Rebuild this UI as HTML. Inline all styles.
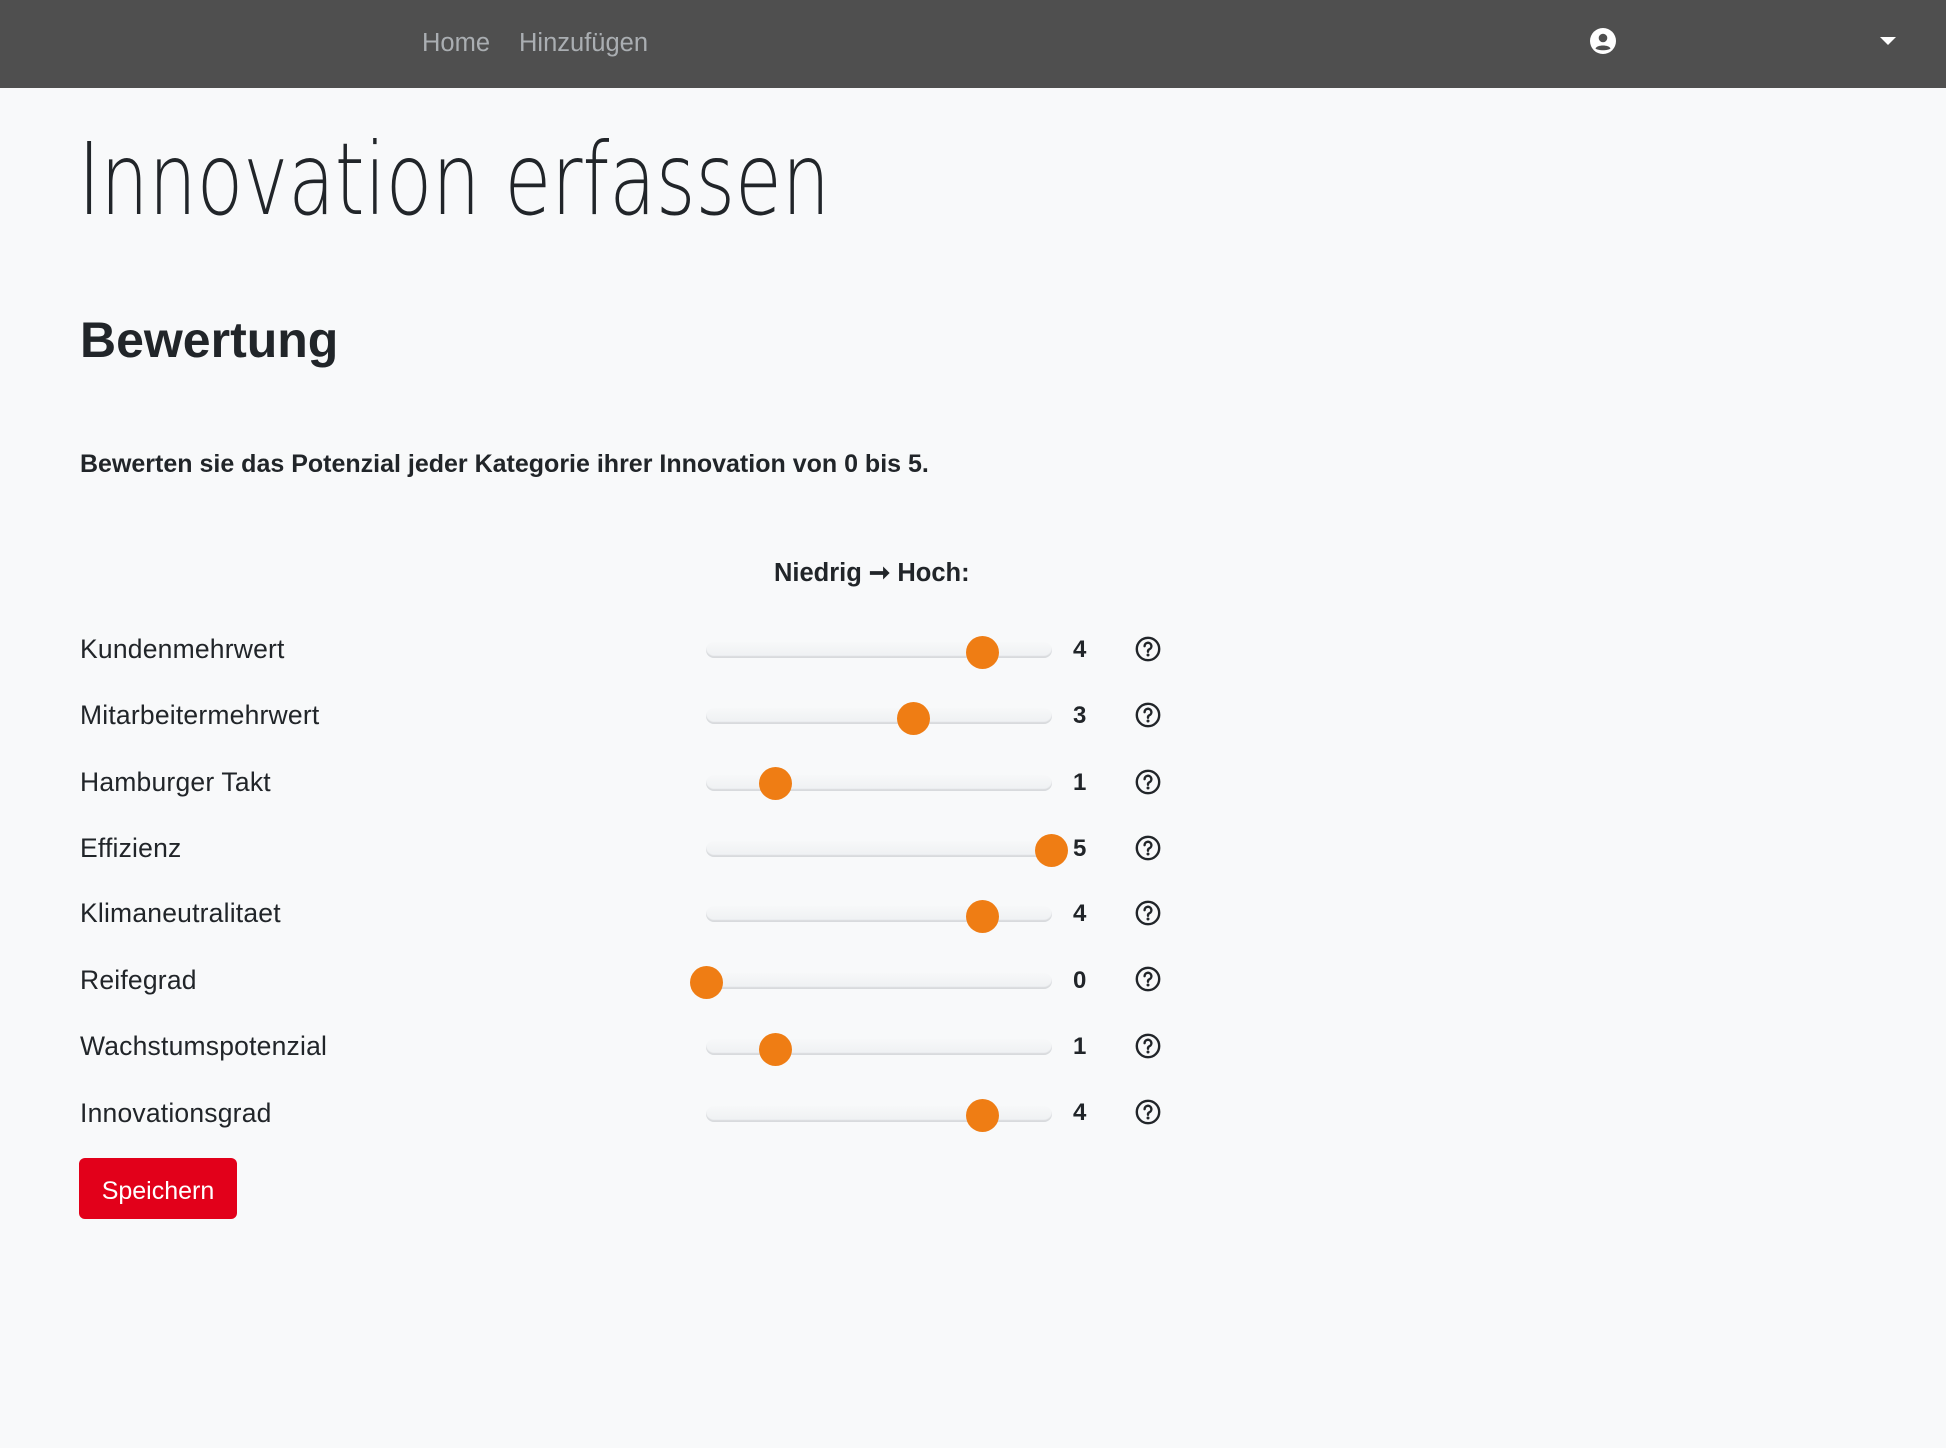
<!DOCTYPE html>
<html><head><meta charset="utf-8"><style>
*{margin:0;padding:0;box-sizing:border-box}
html,body{width:1946px;height:1448px;background:#f8f9fa;font-family:"Liberation Sans",sans-serif;color:#212529;overflow:hidden;position:relative}
.nav{position:absolute;left:0;top:0;width:1946px;height:88px;background:#4f4f4f}
.nl{position:absolute;top:28px;font-size:25.5px;color:#aaaeb2;line-height:30px}
.abs{position:absolute;white-space:nowrap}
h1{position:absolute;left:78px;top:120px;font-family:"DejaVu Sans","Liberation Sans",sans-serif;font-size:100px;font-weight:200;line-height:120px;white-space:nowrap;transform:scaleX(0.76);transform-origin:0 0;color:#212529}
h2{position:absolute;left:80px;top:310px;font-size:50px;font-weight:bold;line-height:60px}
.p{left:80px;top:449px;font-size:25px;font-weight:bold;line-height:30px}
.lab{left:80px;font-size:26.5px;line-height:30px;letter-spacing:0.2px}
.track{position:absolute;left:706px;width:346px;height:16px;border-radius:8px;background:linear-gradient(#f7f8f9,#eef0f2);box-shadow:inset 0 -2px 1px #d8dadd}
.thumb{position:absolute;width:33px;height:33px;border-radius:50%;background:#ef7d14}
.val{font-size:24px;font-weight:bold;line-height:30px}
.help{position:absolute;width:26px;height:26px}
.btn{position:absolute;left:79px;top:1158px;width:158px;height:61px;background:#e2001a;border-radius:6px;color:#fff;font-size:25px;line-height:66px;text-align:center}
</style></head><body>
<div class="nav">
<div class="nl" style="left:422px">Home</div>
<div class="nl" style="left:519px">Hinzufügen</div>
<svg style="position:absolute;left:1590px;top:28px" width="26" height="26" viewBox="0 0 26 26"><circle cx="13" cy="13" r="13" fill="#fff"/><circle cx="13" cy="10" r="4.3" fill="#4f4f4f"/><path d="M5.5 20.5 C7 16.5 19 16.5 20.5 20.5 C18.5 22.8 7.5 22.8 5.5 20.5Z" fill="#4f4f4f"/></svg>
<svg style="position:absolute;left:1880px;top:37px" width="16" height="9" viewBox="0 0 16 9"><path d="M0 0H16L8 8Z" fill="#fff"/></svg>
</div>
<h1>Innovation erfassen</h1>
<h2>Bewertung</h2>
<div class="abs p">Bewerten sie das Potenzial jeder Kategorie ihrer Innovation von 0 bis 5.</div>
<div class="abs" style="left:774px;top:558px;font-size:25.5px;font-weight:bold;line-height:30px">Niedrig ➞ Hoch:</div>

<div class="abs lab" style="top:634px">Kundenmehrwert</div>
<div class="abs lab" style="top:700px">Mitarbeitermehrwert</div>
<div class="abs lab" style="top:767px">Hamburger Takt</div>
<div class="abs lab" style="top:833px">Effizienz</div>
<div class="abs lab" style="top:898px">Klimaneutralitaet</div>
<div class="abs lab" style="top:965px">Reifegrad</div>
<div class="abs lab" style="top:1031px">Wachstumspotenzial</div>
<div class="abs lab" style="top:1098px">Innovationsgrad</div>

<div class="track" style="top:642px"></div><div class="thumb" style="left:966px;top:636px"></div><div class="abs val" style="left:1073px;top:635px">4</div>
<svg class="help" style="left:1135px;top:636px" viewBox="0 0 26 26"><circle cx="13" cy="13" r="11.2" fill="none" stroke="#212529" stroke-width="2.4"/><path d="M9.6 10.2a3.4 3.4 0 1 1 4.7 3.1c-.9.4-1.3 1-1.3 1.9v.6" fill="none" stroke="#212529" stroke-width="2.4" stroke-linecap="round"/><circle cx="13" cy="19" r="1.5" fill="#212529"/></svg>

<div class="track" style="top:708px"></div><div class="thumb" style="left:897px;top:702px"></div><div class="abs val" style="left:1073px;top:701px">3</div>
<svg class="help" style="left:1135px;top:702px" viewBox="0 0 26 26"><circle cx="13" cy="13" r="11.2" fill="none" stroke="#212529" stroke-width="2.4"/><path d="M9.6 10.2a3.4 3.4 0 1 1 4.7 3.1c-.9.4-1.3 1-1.3 1.9v.6" fill="none" stroke="#212529" stroke-width="2.4" stroke-linecap="round"/><circle cx="13" cy="19" r="1.5" fill="#212529"/></svg>

<div class="track" style="top:775px"></div><div class="thumb" style="left:759px;top:767px"></div><div class="abs val" style="left:1073px;top:768px">1</div>
<svg class="help" style="left:1135px;top:769px" viewBox="0 0 26 26"><circle cx="13" cy="13" r="11.2" fill="none" stroke="#212529" stroke-width="2.4"/><path d="M9.6 10.2a3.4 3.4 0 1 1 4.7 3.1c-.9.4-1.3 1-1.3 1.9v.6" fill="none" stroke="#212529" stroke-width="2.4" stroke-linecap="round"/><circle cx="13" cy="19" r="1.5" fill="#212529"/></svg>

<div class="track" style="top:841px"></div><div class="thumb" style="left:1035px;top:834px"></div><div class="abs val" style="left:1073px;top:834px">5</div>
<svg class="help" style="left:1135px;top:835px" viewBox="0 0 26 26"><circle cx="13" cy="13" r="11.2" fill="none" stroke="#212529" stroke-width="2.4"/><path d="M9.6 10.2a3.4 3.4 0 1 1 4.7 3.1c-.9.4-1.3 1-1.3 1.9v.6" fill="none" stroke="#212529" stroke-width="2.4" stroke-linecap="round"/><circle cx="13" cy="19" r="1.5" fill="#212529"/></svg>

<div class="track" style="top:906px"></div><div class="thumb" style="left:966px;top:900px"></div><div class="abs val" style="left:1073px;top:899px">4</div>
<svg class="help" style="left:1135px;top:900px" viewBox="0 0 26 26"><circle cx="13" cy="13" r="11.2" fill="none" stroke="#212529" stroke-width="2.4"/><path d="M9.6 10.2a3.4 3.4 0 1 1 4.7 3.1c-.9.4-1.3 1-1.3 1.9v.6" fill="none" stroke="#212529" stroke-width="2.4" stroke-linecap="round"/><circle cx="13" cy="19" r="1.5" fill="#212529"/></svg>

<div class="track" style="top:973px"></div><div class="thumb" style="left:690px;top:966px"></div><div class="abs val" style="left:1073px;top:966px">0</div>
<svg class="help" style="left:1135px;top:966px" viewBox="0 0 26 26"><circle cx="13" cy="13" r="11.2" fill="none" stroke="#212529" stroke-width="2.4"/><path d="M9.6 10.2a3.4 3.4 0 1 1 4.7 3.1c-.9.4-1.3 1-1.3 1.9v.6" fill="none" stroke="#212529" stroke-width="2.4" stroke-linecap="round"/><circle cx="13" cy="19" r="1.5" fill="#212529"/></svg>

<div class="track" style="top:1039px"></div><div class="thumb" style="left:759px;top:1033px"></div><div class="abs val" style="left:1073px;top:1032px">1</div>
<svg class="help" style="left:1135px;top:1033px" viewBox="0 0 26 26"><circle cx="13" cy="13" r="11.2" fill="none" stroke="#212529" stroke-width="2.4"/><path d="M9.6 10.2a3.4 3.4 0 1 1 4.7 3.1c-.9.4-1.3 1-1.3 1.9v.6" fill="none" stroke="#212529" stroke-width="2.4" stroke-linecap="round"/><circle cx="13" cy="19" r="1.5" fill="#212529"/></svg>

<div class="track" style="top:1106px"></div><div class="thumb" style="left:966px;top:1099px"></div><div class="abs val" style="left:1073px;top:1098px">4</div>
<svg class="help" style="left:1135px;top:1099px" viewBox="0 0 26 26"><circle cx="13" cy="13" r="11.2" fill="none" stroke="#212529" stroke-width="2.4"/><path d="M9.6 10.2a3.4 3.4 0 1 1 4.7 3.1c-.9.4-1.3 1-1.3 1.9v.6" fill="none" stroke="#212529" stroke-width="2.4" stroke-linecap="round"/><circle cx="13" cy="19" r="1.5" fill="#212529"/></svg>

<div class="btn">Speichern</div>
</body></html>
